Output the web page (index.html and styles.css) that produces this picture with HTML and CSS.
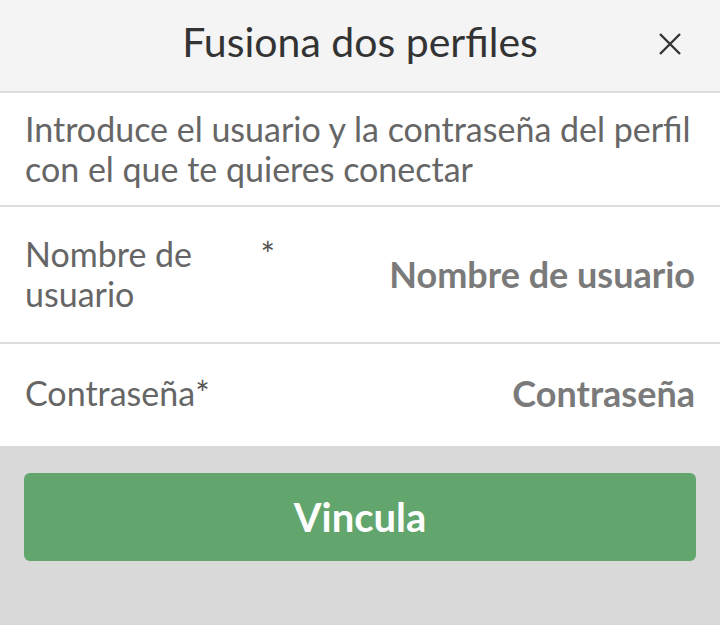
FILE: index.html
```html
<!DOCTYPE html>
<html lang="es">
<head>
  <meta charset="UTF-8" />
  <meta name="viewport" content="width=device-width, initial-scale=1" />
  <title>Fusiona dos perfiles</title>
  <link rel="stylesheet" href="styles.css">
</head>
<body>
  <div class="dialog">
    <header class="dialog-header">
      <h1>Fusiona dos perfiles</h1>
      <button class="close-btn" aria-label="Cerrar">
        <svg width="24" height="24" viewBox="0 0 24 24">
          <path d="M2 2 L22 22 M22 2 L2 22" stroke="#333" stroke-width="2.4" fill="none" />
        </svg>
      </button>
    </header>

    <p class="intro">Introduce el usuario y la contraseña del perfil con el que te quieres conectar</p>

    <div class="field">
      <label for="username" class="field-label">
        <span class="label-text">Nombre de usuario</span>
        <span class="required">*</span>
      </label>
      <input type="text" id="username" placeholder="Nombre de usuario" />
    </div>

    <div class="field field-last">
      <label for="password" class="field-label">
        <span class="label-text">Contraseña</span>
        <span class="required">*</span>
      </label>
      <input type="password" id="password" placeholder="Contraseña" />
    </div>

    <div class="actions">
      <button class="link-btn">Vincula</button>
    </div>
  </div>
</body>
</html>
```

FILE: styles.css
```css
* {
  box-sizing: border-box;
}

html, body {
  height: 100%;
}

body {
  margin: 0;
  font-family: Lato, 'Open Sans', sans-serif;
  background: #d9d9d9;
}

.dialog {
  width: 720px;
  min-height: 100%;
  display: flex;
  flex-direction: column;
}

.dialog-header {
  height: 93px;
  padding-bottom: 8px;
  background: #f4f4f4;
  border-bottom: 2px solid #dedede;
  display: flex;
  align-items: center;
  justify-content: center;
  position: relative;
}

.dialog-header h1 {
  margin: 0;
  font-size: 41px;
  font-weight: 400;
  color: #333;
}

.close-btn {
  position: absolute;
  right: 38px;
  top: 32px;
  background: none;
  border: none;
  padding: 0;
  width: 24px;
  height: 24px;
  cursor: pointer;
}

.intro {
  margin: 0;
  background: #fff;
  padding: 16px 25px 16px;
  font-size: 34px;
  line-height: 40px;
  color: #666;
  border-bottom: 2px solid #dedede;
}

.field {
  background: #fff;
  display: flex;
  align-items: center;
  padding: 27px 25px 28px;
  border-bottom: 2px solid #dedede;
}

.field-last {
  padding-bottom: 31px;
  border-bottom: none;
}

.field-label {
  width: 250px;
  display: flex;
  align-items: flex-start;
  font-size: 34px;
  line-height: 40px;
  color: #666;
  flex-shrink: 0;
}

.required {
  color: #555;
}

.field input {
  flex: 1;
  min-width: 0;
  border: none;
  outline: none;
  background: transparent;
  text-align: right;
  font-family: inherit;
  font-size: 36px;
  font-weight: 700;
  color: #333;
  padding: 0;
}

.field input::placeholder {
  color: #7a7a7a;
}

.actions {
  padding: 27px 24px;
}

.link-btn {
  width: 100%;
  height: 88px;
  background: #62a66e;
  color: #fff;
  border: none;
  border-radius: 6px;
  font-family: inherit;
  font-size: 40px;
  font-weight: 700;
  cursor: pointer;
}
```
